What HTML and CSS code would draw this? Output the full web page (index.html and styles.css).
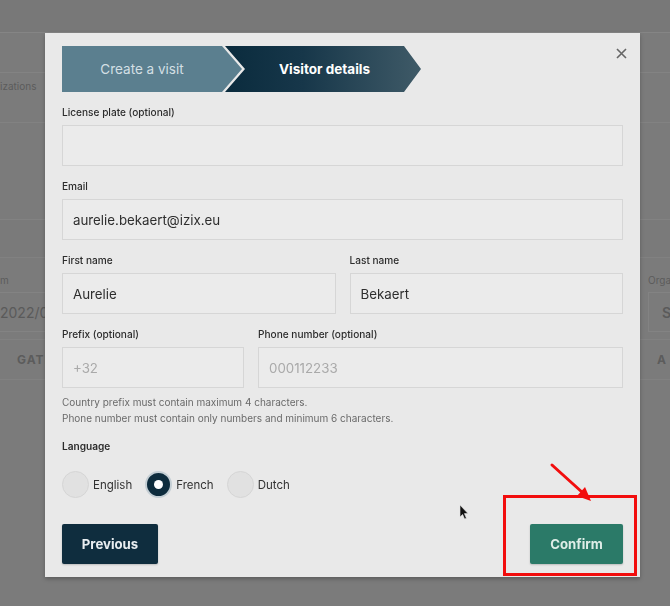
FILE: index.html
```html
<!DOCTYPE html>
<html lang="en">
<head>
<meta charset="utf-8">
<title>Visitor details</title>
<link rel="stylesheet" href="styles.css">
</head>
<body>
<div class="bg">
  <div class="bg-head"></div>
  <div class="bg-bar"></div>
  <div class="bg-tabs"><span class="bg-tab">izations</span></div>
  <div class="bg-blank"></div>
  <div class="bg-band"></div>
  <div class="bg-filters">
    <div class="bg-filter">
      <span class="bg-flabel">m</span>
      <div class="bg-fbox bg-fbox-left">2022/08</div>
    </div>
    <div class="bg-filter">
      <span class="bg-flabel">Orga</span>
      <div class="bg-fbox bg-fbox-right">S</div>
    </div>
  </div>
  <div class="bg-thead">
    <span class="bg-th bg-th-left">GATI</span>
    <span class="bg-th bg-th-right">A</span>
  </div>
</div>

<div class="overlay">
  <div class="modal">
    <div class="modal-head">
      <div class="stepper">
        <div class="step step-done">Create a visit</div>
        <div class="step step-current">Visitor details</div>
      </div>
      <button class="close" aria-label="Close">
        <svg width="11" height="11" viewBox="0 0 11 11"><path d="M1 1 L10 10 M10 1 L1 10" stroke="#666" stroke-width="1.6" fill="none"/></svg>
      </button>
    </div>

    <div class="field">
      <label class="label">License plate (optional)</label>
      <input class="input" type="text">
    </div>

    <div class="field">
      <label class="label">Email</label>
      <input class="input" type="text" value="aurelie.bekaert@izix.eu">
    </div>

    <div class="row row-names">
      <div class="field">
        <label class="label">First name</label>
        <input class="input" type="text" value="Aurelie">
      </div>
      <div class="field">
        <label class="label">Last name</label>
        <input class="input" type="text" value="Bekaert">
      </div>
    </div>

    <div class="phone-group">
      <div class="row row-phone">
        <div class="field">
          <label class="label">Prefix (optional)</label>
          <input class="input" type="text" placeholder="+32">
        </div>
        <div class="field">
          <label class="label">Phone number (optional)</label>
          <input class="input" type="text" placeholder="000112233">
        </div>
      </div>
      <p class="help">Country prefix must contain maximum 4 characters.<br>Phone number must contain only numbers and minimum 6 characters.</p>
    </div>

    <div class="language">
      <span class="label label-strong">Language</span>
      <div class="radios">
        <span class="radio"><span class="dot"></span>English</span>
        <span class="radio"><span class="dot dot-on"></span>French</span>
        <span class="radio"><span class="dot"></span>Dutch</span>
      </div>
    </div>

    <div class="actions">
      <button class="btn btn-prev">Previous</button>
      <button class="btn btn-confirm">Confirm</button>
    </div>
  </div>
</div>

<svg class="annot" width="670" height="606" viewBox="0 0 670 606">
  <rect x="504.5" y="496.5" width="131" height="78" fill="none" stroke="#f20d0d" stroke-width="3"/>
  <line x1="552" y1="465" x2="583" y2="493" stroke="#f20d0d" stroke-width="3" stroke-linecap="round"/>
  <polygon points="591,501 577,496 585,487" fill="#f20d0d"/>
  <path d="M460 505 L460 517 L462.6 514.4 L464.6 519 L466.4 518.2 L464.4 513.6 L468 513.6 Z" fill="#111" stroke="#e6e6e6" stroke-width="0.6"/>
</svg>
</body>
</html>
```

FILE: styles.css
```css
* {
  box-sizing: border-box;
}

html, body {
  margin: 0;
  padding: 0;
}

body {
  width: 670px;
  height: 606px;
  overflow: hidden;
  background: #7b7b7b;
  font-family: Inter, "Liberation Sans", sans-serif;
  color: #2f2f2f;
}

/* ---------- dimmed page behind the dialog ---------- */
.bg {
  height: 606px;
  overflow: hidden;
}

.bg-head {
  height: 33px;
  background: #787878;
  border-bottom: 1px solid #858585;
}

.bg-bar {
  height: 40px;
  border-bottom: 1px solid #838383;
}

.bg-tabs {
  height: 50px;
  padding-top: 7px;
  border-bottom: 1px solid #828282;
}

.bg-tab {
  display: block;
  font-size: 10px;
  line-height: 12px;
  color: #5c5c5c;
}

.bg-blank {
  height: 97px;
  border-bottom: 1px solid #828282;
}

.bg-band {
  height: 38px;
  background: #7a7a7a;
  border-bottom: 1px solid #818181;
}

.bg-filters {
  display: grid;
  grid-template-columns: 1fr 22px;
  height: 82px;
  padding-top: 16px;
  border-bottom: 1px solid #818181;
}

.bg-filter {
  display: flex;
  flex-direction: column;
  gap: 6px;
}

.bg-flabel {
  font-size: 10px;
  line-height: 12px;
  color: #5c5c5c;
}

.bg-fbox {
  height: 40px;
  border: 1px solid #838383;
  display: flex;
  align-items: center;
  font-size: 14px;
  color: #5a5a5a;
}

.bg-fbox-left {
  width: 130px;
  border-left: 0;
}

.bg-fbox-right {
  width: 60px;
  padding-left: 13px;
  font-weight: 600;
}

.bg-thead {
  display: grid;
  grid-template-columns: 1fr 22px;
  height: 40px;
  align-items: center;
  border-bottom: 1px solid #818181;
}

.bg-th {
  font-size: 12px;
  font-weight: 700;
  letter-spacing: 1px;
  color: #5c5c5c;
}

.bg-th-left {
  padding-left: 17px;
}

.bg-th-right {
  padding-left: 9px;
}

/* ---------- dialog ---------- */
.overlay {
  position: fixed;
  inset: 0;
  display: flex;
  align-items: flex-start;
  padding: 33px 0 0 45px;
}

.modal {
  width: 595px;
  height: 544px;
  background: #e9e9e9;
  padding: 13px 17px 13px 17px;
  display: flex;
  flex-direction: column;
  gap: 13px;
  box-shadow: 0 2px 4px rgba(0, 0, 0, 0.25);
}

.modal-head {
  display: flex;
  align-items: flex-start;
}

.stepper {
  display: flex;
  height: 46px;
}

.step {
  height: 46px;
  flex-shrink: 0;
  display: flex;
  align-items: center;
  justify-content: center;
  font-size: 13.5px;
}

.step-done {
  width: 180px;
  padding-right: 20px;
  background: #5b7f8f;
  color: #d3dfe4;
  clip-path: polygon(0 0, calc(100% - 20px) 0, 100% 50%, calc(100% - 20px) 100%, 0 100%);
}

.step-current {
  width: 196px;
  margin-left: -17px;
  padding-left: 20px;
  padding-right: 17px;
  background: linear-gradient(90deg, #0a2b3d 0%, #17374a 40%, #3f5a67 100%);
  color: #ffffff;
  font-weight: 700;
  clip-path: polygon(0 0, calc(100% - 17px) 0, 100% 50%, calc(100% - 17px) 100%, 0 100%, 20px 50%);
}

.close {
  margin-left: auto;
  margin-top: 2px;
  margin-right: -4px;
  width: 11px;
  height: 11px;
  padding: 0;
  border: 0;
  background: none;
  display: block;
}

.close svg {
  display: block;
}

.field {
  display: flex;
  flex-direction: column;
  gap: 6px;
}

.label {
  display: block;
  font-size: 10.1px;
  line-height: 14px;
  font-weight: 500;
  color: #2c2c2c;
}

.label-strong {
  font-weight: 600;
}

.input {
  display: block;
  width: 100%;
  height: 41px;
  margin: 0;
  padding: 0 10px;
  background: #ebebeb;
  border: 1px solid #d6d6d6;
  border-radius: 0;
  font-family: Inter, "Liberation Sans", sans-serif;
  font-size: 13.3px;
  color: #2e2e2e;
  outline: none;
}

.input::placeholder {
  color: #a9a9a9;
}

.row {
  display: grid;
  column-gap: 14px;
}

.row-names {
  grid-template-columns: 1fr 1fr;
}

.row-phone {
  grid-template-columns: 182px 1fr;
}

.help {
  margin: 6px 0 0;
  font-size: 10px;
  line-height: 16px;
  color: #6a6a6a;
}

.language {
  display: flex;
  flex-direction: column;
}

.radios {
  display: flex;
  gap: 13px;
  margin-top: 18px;
  height: 27px;
  align-items: center;
}

.radio {
  display: flex;
  align-items: center;
  gap: 4px;
  font-size: 11.5px;
  color: #333333;
}

.dot {
  width: 27px;
  height: 27px;
  border-radius: 50%;
  background: #e1e1e1;
  border: 1px solid #d5d5d5;
  display: flex;
  align-items: center;
  justify-content: center;
}

.dot-on {
  background: #0e2c3d;
  border: 2px solid #c4ced4;
}

.dot-on::after {
  content: "";
  width: 9px;
  height: 9px;
  border-radius: 50%;
  background: #ffffff;
}

.actions {
  display: flex;
  justify-content: space-between;
  margin-top: 13px;
}

.btn {
  height: 40px;
  border: 0;
  border-radius: 2px;
  padding: 0;
  font-family: Inter, "Liberation Sans", sans-serif;
  font-size: 13.2px;
  font-weight: 700;
  box-shadow: 0 1px 2px rgba(0, 0, 0, 0.2);
}

.btn-prev {
  width: 96px;
  background: #0f2d3e;
  color: #e8edf0;
}

.btn-confirm {
  width: 93px;
  background: #2b7a68;
  color: #deede7;
}

/* ---------- screenshot annotation ---------- */
.annot {
  position: fixed;
  left: 0;
  top: 0;
  pointer-events: none;
}
```
